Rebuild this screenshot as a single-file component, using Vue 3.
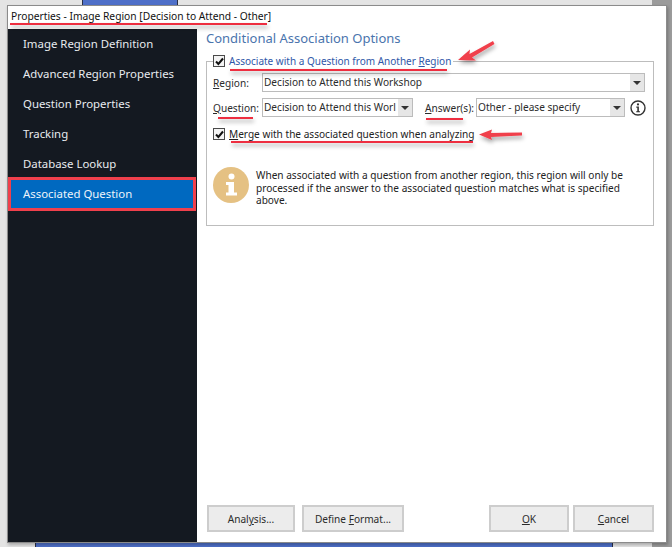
<script setup>
const navItems = [
  { label: 'Image Region Definition' },
  { label: 'Advanced Region Properties' },
  { label: 'Question Properties' },
  { label: 'Tracking' },
  { label: 'Database Lookup' },
  { label: 'Associated Question', active: true }
]
const underlines = [
  'M10 24H267',
  'M230 70H447',
  'M218 118H253',
  'M426 119H463',
  'M231 142H473'
]
</script>

<template>
  <div class="screen">
    <div class="backdrop">
      <div class="strip-top"><i class="blue-top"></i></div>
      <i class="shade-right"></i>
      <div class="strip-bottom"><i class="blue-bottom"></i></div>
    </div>

    <div class="window">
      <header class="titlebar">Properties - Image Region [Decision to Attend - Other]</header>
      <div class="body">
        <nav class="sidebar">
          <div
            v-for="item in navItems"
            :key="item.label"
            class="nav-item"
            :class="{ active: item.active }"
          >{{ item.label }}</div>
        </nav>

        <main class="content">
          <h1 class="heading">Conditional Association Options</h1>
          <fieldset class="group">
            <legend class="legend">
              <span class="check">
                <svg viewBox="0 0 9 9" width="9" height="9"><path d="M1 4.5 3.4 7 8 1.5" fill="none" stroke="#111" stroke-width="2" /></svg>
              </span>
              <span class="legend-text">Associate with a Question from Another <u>R</u>egion</span>
            </legend>

            <div class="row first-row">
              <label class="label"><u>R</u>egion:</label>
              <div class="combo grow">
                <span class="combo-text">Decision to Attend this Workshop</span>
                <span class="combo-btn"><i></i></span>
              </div>
            </div>

            <div class="row second-row">
              <label class="label"><u>Q</u>uestion:</label>
              <div class="combo question-combo">
                <span class="combo-text">Decision to Attend this Worl</span>
                <span class="combo-btn"><i></i></span>
              </div>
              <label class="label answer-label"><u>A</u>nswer(s):</label>
              <div class="combo answer-combo">
                <span class="combo-text">Other - please specify</span>
                <span class="combo-btn"><i></i></span>
              </div>
              <svg class="info-small" viewBox="0 0 16 16" width="16" height="16">
                <circle cx="8" cy="8" r="7" fill="none" stroke="#333" stroke-width="1.4" />
                <circle cx="8" cy="4.4" r="1.1" fill="#333" />
                <path d="M6.3 6.6H8.9V11.2H10V12.3H6.2V11.2H7.3V7.7H6.3Z" fill="#333" />
              </svg>
            </div>

            <div class="merge-row">
              <span class="check">
                <svg viewBox="0 0 9 9" width="9" height="9"><path d="M1 4.5 3.4 7 8 1.5" fill="none" stroke="#111" stroke-width="2" /></svg>
              </span>
              <span class="merge-text"><u>M</u>erge with the associated question when analyzing</span>
            </div>

            <div class="note">
              <svg class="note-icon" viewBox="0 0 36 36" width="36" height="36">
                <circle cx="18" cy="18" r="18" fill="#e5c183" />
                <circle cx="18.500" cy="9.500" r="3" fill="#fff" />
                <path d="M13 15H21V25.500H24V28.500H13V25.500H15.500V18H13Z" fill="#fff" />
              </svg>
              <p class="note-text">When associated with a question from another region, this region will only be processed if the answer to the associated question matches what is specified above.</p>
            </div>
          </fieldset>

          <div class="actions">
            <button class="btn analysis">Anal<u>y</u>sis...</button>
            <button class="btn define">Define <u>F</u>ormat...</button>
            <span class="spacer"></span>
            <button class="btn ok"><u>O</u>K</button>
            <button class="btn cancel"><u>C</u>ancel</button>
          </div>
        </main>
      </div>
    </div>

    <i class="nav-highlight"></i>

    <svg class="annotations" viewBox="0 0 672 547" width="672" height="547">
      <defs>
        <filter id="markShadow" filterUnits="userSpaceOnUse" x="0" y="0" width="672" height="547">
          <feDropShadow dx="1" dy="3" stdDeviation="2" flood-color="#000" flood-opacity="0.35" />
        </filter>
      </defs>
      <path
        v-for="d in underlines"
        :key="d"
        :d="d"
        stroke="#ee2f40"
        stroke-width="2"
        fill="none"
        filter="url(#markShadow)"
      />
      <path d="M458 60 470 49.500 469.500 54 493 41 494.500 44 472 57.500 476 60.500Z" fill="#f0404c" filter="url(#markShadow)" />
      <path d="M479 134.500 492 129.500 491 133 522 132.500 522 135.500 491 137 492 140Z" fill="#f0404c" filter="url(#markShadow)" />
    </svg>
  </div>
</template>

<style>
html, body { margin: 0; padding: 0; }
</style>

<style scoped>
.screen {
  position: relative;
  width: 672px;
  height: 547px;
  overflow: hidden;
  background: #e4e4e4;
  font-family: "Noto Sans", "Open Sans", sans-serif;
  color: #2b2b2b;
}
.backdrop { position: absolute; inset: 0; }
.strip-top, .strip-bottom { position: absolute; left: 0; width: 100%; height: 6px; }
.strip-top { top: 0; }
.strip-bottom { bottom: 0; }
.blue-top {
  position: absolute;
  left: 82px;
  width: 96px;
  top: 0;
  height: 6px;
  background: #4e6fc8;
  border: 1px solid #2a2f45;
  border-top: 0;
  box-sizing: border-box;
}
.blue-bottom {
  position: absolute;
  left: 35px;
  width: 576px;
  top: 0;
  bottom: 0;
  background: #4e6fc8;
  border-left: 1px solid #2a2f45;
  border-right: 1px solid #2a2f45;
}
.shade-right {
  position: absolute;
  right: 0;
  top: 0;
  bottom: 0;
  width: 20px;
  background: #9b9b9b;
}
.window {
  position: absolute;
  left: 7px;
  top: 5px;
  width: 660px;
  height: 538px;
  box-sizing: border-box;
  background: #fff;
  border: 1px solid #8b8b8b;
  box-shadow: 1px 2px 3px rgba(0, 0, 0, 0.25);
  display: flex;
  flex-direction: column;
}
.titlebar {
  height: 23px;
  line-height: 21px;
  padding-left: 3px;
  font-size: 10.25px;
  color: #111;
  white-space: nowrap;
}
.body { flex: 1; display: flex; min-height: 0; }
.sidebar {
  width: 189px;
  box-sizing: border-box;
  background: #141921;
  padding: 1px 3px 0;
  display: flex;
  flex-direction: column;
}
.nav-item {
  height: 30px;
  line-height: 28px;
  padding-left: 12px;
  font-size: 11.4px;
  color: #e8ebef;
  white-space: nowrap;
}
.nav-item.active { background: #0069c0; color: #eef4fa; }
.content {
  flex: 1;
  min-width: 0;
  display: flex;
  flex-direction: column;
  padding: 0 12px 10px 9px;
}
.heading {
  margin: 0;
  height: 20px;
  line-height: 19px;
  font-size: 13px;
  font-weight: 400;
  color: #4a74ad;
  white-space: nowrap;
}
.group {
  margin: 6px 0 0;
  padding: 0 8px 0 6px;
  height: 171px;
  box-sizing: border-box;
  border: 1px solid #bdbdbd;
  min-width: 0;
}
.legend {
  display: flex;
  align-items: center;
  gap: 4px;
  padding: 0;
  height: 12px;
  margin-left: 0;
  background: #fff;
  font-size: 10px;
  line-height: 12px;
  white-space: nowrap;
}
.legend-text { color: #2f57a8; background: #fff; padding-right: 2px; }
.check {
  flex: none;
  width: 12px;
  height: 12px;
  box-sizing: border-box;
  border: 1.5px solid #4a4a4a;
  background: #f4f4f4;
  display: flex;
  align-items: center;
  justify-content: center;
}
.row { display: flex; align-items: center; }
.first-row { margin-top: 6px; }
.second-row { margin-top: 6px; }
.label {
  width: 49px;
  flex: none;
  font-size: 10.1px;
  color: #2b2b2b;
  white-space: nowrap;
}
.answer-label { width: 51px; margin-left: 12px; }
.combo {
  height: 19px;
  box-sizing: border-box;
  border: 1px solid #bcbcbc;
  background: #fff;
  display: flex;
  align-items: stretch;
  min-width: 0;
  font-size: 10.1px;
}
.grow { flex: 1; }
.question-combo { width: 151px; flex: none; }
.answer-combo { width: 149px; flex: none; }
.combo-text {
  flex: 1;
  min-width: 0;
  white-space: nowrap;
  padding-left: 1px;
  line-height: 16px;
  color: #2b2b2b;
}
.combo-btn {
  flex: none;
  width: 14px;
  background: #e6e6e6;
  display: flex;
  align-items: center;
  justify-content: center;
}
.combo-btn i {
  width: 0;
  height: 0;
  border-left: 4px solid transparent;
  border-right: 4px solid transparent;
  border-top: 4px solid #333;
}
.info-small { flex: none; margin-left: 5px; }
.merge-row {
  display: flex;
  align-items: center;
  gap: 4px;
  margin-top: 10px;
  font-size: 10.1px;
  white-space: nowrap;
}
.merge-text { color: #222; }
.note {
  display: flex;
  gap: 7px;
  margin-top: 26px;
  padding-right: 6px;
}
.note-icon { flex: none; }
.note-text {
  margin: 2px 0 0;
  font-size: 10.1px;
  line-height: 12.5px;
  color: #222;
}
.actions {
  margin-top: auto;
  display: flex;
  gap: 7px;
  padding-left: 1px;
}
.spacer { flex: 1; }
.btn {
  height: 27px;
  box-sizing: border-box;
  border: 2px solid #cdcdcd;
  background: #ececec;
  padding: 1px 0 0;
  font: inherit;
  font-size: 10.1px;
  color: #2b2b2b;
}
.analysis { width: 88px; }
.define { width: 102px; }
.ok { width: 80px; margin-right: -3px; }
.cancel { width: 81px; }
.nav-highlight {
  position: absolute;
  left: 8px;
  top: 177px;
  width: 188px;
  height: 34px;
  box-sizing: border-box;
  border: 3px solid #f0404c;
  pointer-events: none;
}
.annotations { position: absolute; left: 0; top: 0; pointer-events: none; }
</style>
